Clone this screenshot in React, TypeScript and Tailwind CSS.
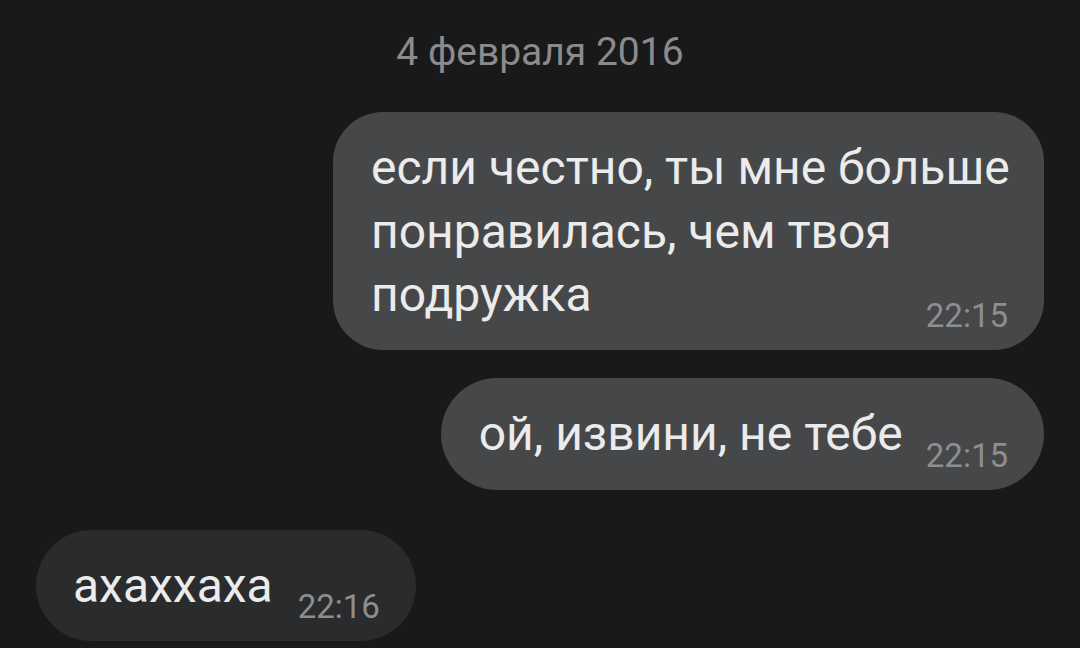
export default function App() {
  return (
    <div
      className="w-[1080px] h-[648px] overflow-hidden bg-[#19191a] flex flex-col px-[36px]"
      style={{ fontFamily: "Roboto, 'Noto Sans', sans-serif" }}
    >
      <div className="pt-[28px] text-center text-[39px] leading-[48px] text-[#8b8b8d]">
        4 февраля 2016
      </div>

      <div className="mt-[36px] self-end w-[711px] bg-[#464749] rounded-[50px] pl-[38px] pr-[36px] pt-[24px] pb-[16px]">
        <p className="flow-root -mr-[8px] text-[48px] leading-[63.5px] text-[#ebebeb]">
          если честно, ты мне больше понравилась, чем твоя подружка
          <span className="float-right mt-[35px] mr-[8px] text-[33px] leading-[36px] text-[#8e8e90]">
            22:15
          </span>
        </p>
      </div>

      <div className="mt-[28px] self-end bg-[#464749] rounded-[56px] pl-[38px] pr-[36px] pt-[24px] pb-[24px] flex items-end gap-[23px]">
        <p className="text-[48px] leading-[63.5px] text-[#ebebeb]">ой, извини, не тебе</p>
        <span className="-mb-[8px] text-[33px] leading-[36px] text-[#8e8e90]">22:15</span>
      </div>

      <div className="mt-[40px] self-start bg-[#2a2b2d] rounded-[56px] pl-[37px] pr-[36px] pt-[24px] pb-[24px] flex items-end gap-[25px]">
        <p className="text-[48px] leading-[63.5px] text-[#ebebeb]">ахаххаха</p>
        <span className="-mb-[8px] text-[33px] leading-[36px] text-[#8e8e90]">22:16</span>
      </div>
    </div>
  );
}
